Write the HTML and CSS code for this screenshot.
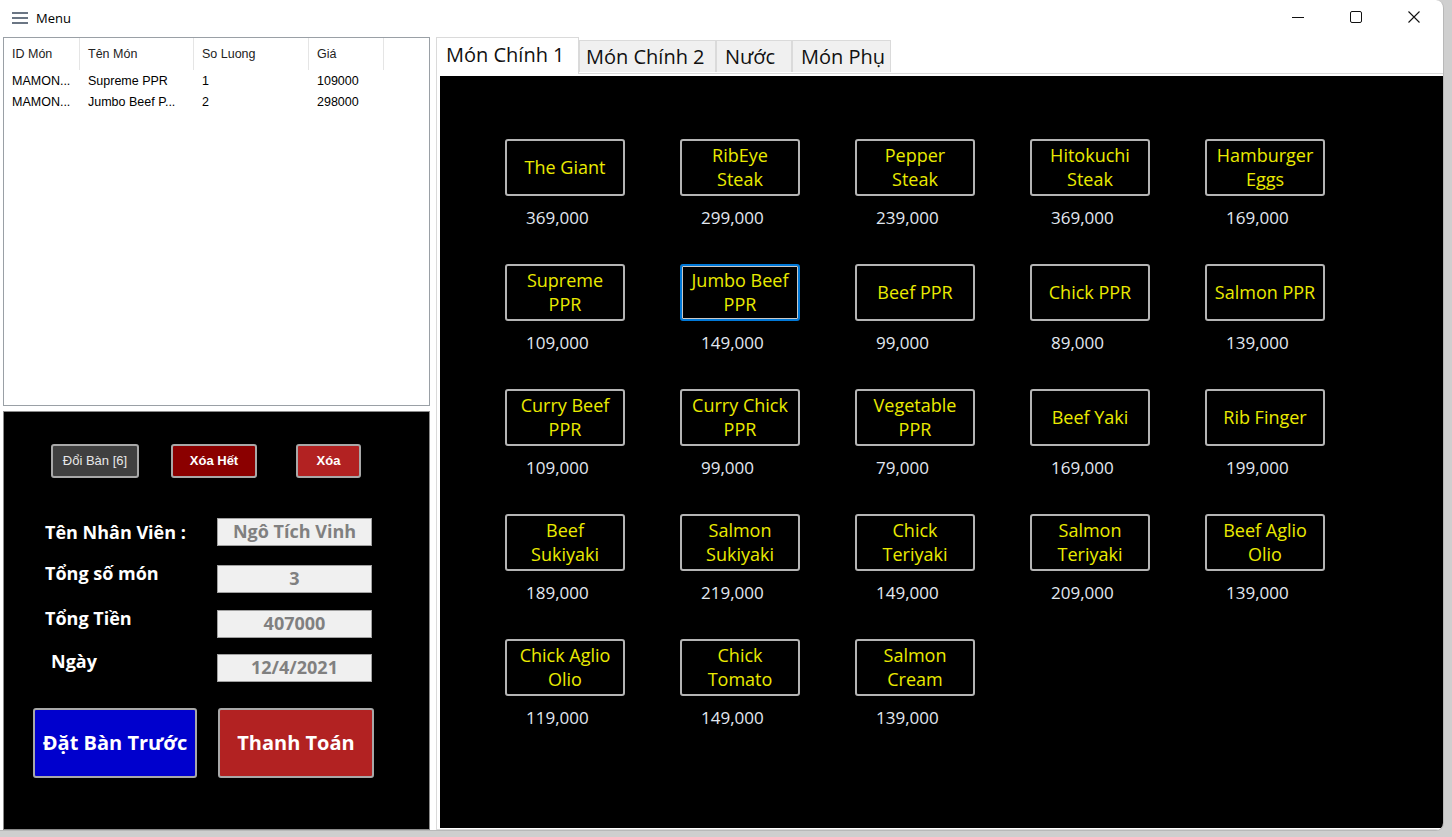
FILE: index.html
```html
<!DOCTYPE html>
<html lang="vi">
<head>
<meta charset="utf-8">
<title>Menu</title>
<link rel="stylesheet" href="styles.css">
</head>
<body>
<div class="window">
  <div class="titlebar">
    <svg class="hamburger" width="16" height="12" viewBox="0 0 16 12"><rect x="0" y="0" width="16" height="2" fill="#6b7684"/><rect x="0" y="5" width="16" height="2" fill="#6b7684"/><rect x="0" y="10" width="16" height="2" fill="#6b7684"/></svg>
    <span class="title">Menu</span>
    <div class="controls">
      <span class="ctl"><svg width="12" height="12" viewBox="0 0 12 12"><line x1="0" y1="6.5" x2="12" y2="6.5" stroke="#111" stroke-width="1"/></svg></span>
      <span class="ctl"><svg width="12" height="12" viewBox="0 0 12 12"><rect x="0.5" y="0.5" width="11" height="11" rx="1.5" fill="none" stroke="#111" stroke-width="1"/></svg></span>
      <span class="ctl"><svg width="12" height="12" viewBox="0 0 12 12"><path d="M0.5 0.5 L11.5 11.5 M11.5 0.5 L0.5 11.5" stroke="#111" stroke-width="1.1"/></svg></span>
    </div>
  </div>
  <div class="main">
    <div class="left">
      <div class="list">
        <div class="lrow lhead">
          <span class="c1">ID Món</span><span class="c2">Tên Món</span><span class="c3">So Luong</span><span class="c4">Giá</span><span class="c5"></span>
        </div>
        <div class="lrow">
          <span class="c1">MAMON...</span><span class="c2">Supreme PPR</span><span class="c3">1</span><span class="c4">109000</span>
        </div>
        <div class="lrow">
          <span class="c1">MAMON...</span><span class="c2">Jumbo Beef P...</span><span class="c3">2</span><span class="c4">298000</span>
        </div>
      </div>
      <div class="panel">
        <div class="smallbtns">
          <button class="sbtn doi">Đổi Bàn [6]</button>
          <button class="sbtn xoahet">Xóa Hết</button>
          <button class="sbtn xoa">Xóa</button>
        </div>
        <div class="fields">
          <div class="frow r1">
            <span class="flabel">Tên Nhân Viên :</span>
            <span class="fbox">Ngô Tích Vinh</span>
          </div>
          <div class="frow r2">
            <span class="flabel up">Tổng số món</span>
            <span class="fbox">3</span>
          </div>
          <div class="frow r3">
            <span class="flabel up">Tổng Tiền</span>
            <span class="fbox">407000</span>
          </div>
          <div class="frow r4">
            <span class="flabel up indent">Ngày</span>
            <span class="fbox">12/4/2021</span>
          </div>
        </div>
        <div class="bigbtns">
          <button class="bbtn blue">Đặt Bàn Trước</button>
          <button class="bbtn red">Thanh Toán</button>
        </div>
      </div>
    </div>
    <div class="tabs">
      <div class="tabstrip">
        <span class="tab active">Món Chính 1</span>
        <span class="tab t2">Món Chính 2</span>
        <span class="tab t3">Nước</span>
        <span class="tab t4">Món Phụ</span>
      </div>
      <div class="page">
        <div class="food">
          <div class="grid">
            <div class="item"><button class="fbtn">The Giant</button><span class="price">369,000</span></div>
            <div class="item"><button class="fbtn">RibEye<br>Steak</button><span class="price">299,000</span></div>
            <div class="item"><button class="fbtn">Pepper<br>Steak</button><span class="price">239,000</span></div>
            <div class="item"><button class="fbtn">Hitokuchi<br>Steak</button><span class="price">369,000</span></div>
            <div class="item"><button class="fbtn">Hamburger<br>Eggs</button><span class="price">169,000</span></div>

            <div class="item"><button class="fbtn">Supreme<br>PPR</button><span class="price">109,000</span></div>
            <div class="item"><button class="fbtn focus">Jumbo Beef<br>PPR</button><span class="price">149,000</span></div>
            <div class="item"><button class="fbtn">Beef PPR</button><span class="price">99,000</span></div>
            <div class="item"><button class="fbtn">Chick PPR</button><span class="price">89,000</span></div>
            <div class="item"><button class="fbtn">Salmon PPR</button><span class="price">139,000</span></div>

            <div class="item"><button class="fbtn">Curry Beef<br>PPR</button><span class="price">109,000</span></div>
            <div class="item"><button class="fbtn">Curry Chick<br>PPR</button><span class="price">99,000</span></div>
            <div class="item"><button class="fbtn">Vegetable<br>PPR</button><span class="price">79,000</span></div>
            <div class="item"><button class="fbtn">Beef Yaki</button><span class="price">169,000</span></div>
            <div class="item"><button class="fbtn">Rib Finger</button><span class="price">199,000</span></div>

            <div class="item"><button class="fbtn">Beef<br>Sukiyaki</button><span class="price">189,000</span></div>
            <div class="item"><button class="fbtn">Salmon<br>Sukiyaki</button><span class="price">219,000</span></div>
            <div class="item"><button class="fbtn">Chick<br>Teriyaki</button><span class="price">149,000</span></div>
            <div class="item"><button class="fbtn">Salmon<br>Teriyaki</button><span class="price">209,000</span></div>
            <div class="item"><button class="fbtn">Beef Aglio<br>Olio</button><span class="price">139,000</span></div>

            <div class="item"><button class="fbtn">Chick Aglio<br>Olio</button><span class="price">119,000</span></div>
            <div class="item"><button class="fbtn">Chick<br>Tomato</button><span class="price">149,000</span></div>
            <div class="item"><button class="fbtn">Salmon<br>Cream</button><span class="price">139,000</span></div>
          </div>
        </div>
      </div>
    </div>
  </div>
</div>
</body>
</html>
```

FILE: styles.css
```css
html, body {
  margin: 0;
  padding: 0;
}
body {
  background: #cfcfcf;
  width: 1452px;
  height: 837px;
  overflow: hidden;
  font-family: "Open Sans", "Noto Sans", sans-serif;
}
.window {
  width: 1444px;
  height: 831px;
  background: #ffffff;
  border-radius: 0 8px 8px 0;
  box-sizing: border-box;
  border-right: 1px solid #b8b8b8;
  border-bottom: 1px solid #b8b8b8;
  display: flex;
  flex-direction: column;
  overflow: hidden;
}
.titlebar {
  height: 37px;
  flex: none;
  display: flex;
  align-items: center;
  padding-left: 12px;
  box-sizing: border-box;
}
.hamburger {
  display: block;
  margin-top: -1px;
}
.title {
  margin-left: 8px;
  font-size: 13px;
  color: #000;
  margin-top: -2px;
}
.controls {
  margin-left: auto;
  display: flex;
  margin-top: -3px;
}
.ctl {
  width: 58px;
  height: 30px;
  display: flex;
  align-items: center;
  justify-content: center;
}
.main {
  flex: 1;
  display: flex;
  min-height: 0;
}
.left {
  width: 427px;
  margin-left: 3px;
  display: flex;
  flex-direction: column;
  flex: none;
}
.list {
  height: 369px;
  border: 1px solid #9aa0a6;
  box-sizing: border-box;
  background: #fff;
  font-family: "Liberation Sans", Arial, sans-serif;
  font-size: 12.5px;
}
.lrow {
  display: flex;
  height: 21px;
  align-items: center;
  color: #000;
}
.lhead {
  height: 32px;
  color: #222;
}
.lrow span {
  box-sizing: border-box;
  padding-left: 8px;
  white-space: nowrap;
  overflow: hidden;
}
.lhead span {
  height: 32px;
  line-height: 32px;
  border-right: 1px solid #e5e5e5;
}
.c1 { width: 76px; }
.c2 { width: 114px; }
.c3 { width: 115px; }
.c4 { width: 75px; }
.lhead .c5 { width: 0; border-right: none; }

.panel {
  margin-top: 5px;
  height: 420px;
  background: #000;
  border: 1px solid #8a8a8a;
  box-sizing: border-box;
  display: flex;
  flex-direction: column;
}
.smallbtns {
  display: flex;
  padding-top: 32px;
  padding-left: 47px;
}
.sbtn {
  height: 34px;
  border: 2px solid #a8a8a8;
  border-radius: 3px;
  color: #fff;
  font-family: "Liberation Sans", Arial, sans-serif;
  font-size: 13px;
  padding: 0;
}
.doi {
  width: 88px;
  background: #404040;
  color: #e8e8e8;
}
.xoahet {
  width: 86px;
  margin-left: 32px;
  background: #8b0000;
  font-weight: bold;
}
.xoa {
  width: 65px;
  margin-left: 39px;
  background: #b22222;
  font-weight: bold;
}
.fields {
  margin-top: 40px;
  display: flex;
  flex-direction: column;
}
.frow {
  display: flex;
  align-items: center;
  height: 28px;
}
.frow.r2 { margin-top: 19px; }
.frow.r3 { margin-top: 17px; }
.frow.r4 { margin-top: 16px; }
.flabel {
  width: 172px;
  padding-left: 41px;
  box-sizing: border-box;
  color: #fff;
  font-weight: bold;
  font-size: 18px;
  white-space: nowrap;
}
.flabel.up {
  margin-top: -12px;
}
.flabel.indent {
  padding-left: 47px;
  margin-top: -14px;
}
.fbox {
  width: 155px;
  height: 28px;
  box-sizing: border-box;
  background: #f0f0f0;
  border: 1px solid #a0a0a0;
  color: #808080;
  font-weight: bold;
  font-size: 18px;
  text-align: center;
  line-height: 25px;
  margin-left: 41px;
}
.bigbtns {
  display: flex;
  margin-top: 26px;
  padding-left: 29px;
}
.bbtn {
  height: 70px;
  border: 2px solid #a8a8a8;
  border-radius: 3px;
  color: #fff;
  font-family: "Open Sans", sans-serif;
  font-weight: bold;
  font-size: 20px;
  padding: 0;
  white-space: nowrap;
}
.bbtn.blue {
  width: 164px;
  background: #0000cd;
}
.bbtn.red {
  width: 156px;
  margin-left: 21px;
  background: #b22222;
}

.tabs {
  margin-left: 6px;
  flex: 1;
  display: flex;
  flex-direction: column;
  min-width: 0;
}
.tabstrip {
  display: flex;
  height: 36px;
  align-items: flex-end;
  position: relative;
  z-index: 1;
}
.tab {
  height: 32px;
  box-sizing: border-box;
  background: #f0f0f0;
  border: 1px solid #dadada;
  border-bottom: none;
  font-size: 20px;
  color: #111;
  line-height: 32px;
  padding-left: 6px;
  white-space: nowrap;
  margin-bottom: 1px;
}
.tab.active {
  height: 37px;
  background: #fff;
  line-height: 33px;
  padding-left: 9px;
  width: 143px;
  margin-bottom: -1px;
}
.t2 { width: 137px; padding-left: 6px; }
.t3 { width: 76px; padding-left: 8px; }
.t4 { width: 99px; padding-left: 8px; }
.page {
  flex: 1;
  border: 1px solid #dadada;
  border-right: none;
  background: #fff;
  padding: 2px 0 1px 3px;
  display: flex;
}
.food {
  flex: 1;
  background: #000;
  padding: 63px 0 0 65px;
}
.grid {
  display: grid;
  grid-template-columns: repeat(5, 120px);
  column-gap: 55px;
  grid-auto-rows: 125px;
}
.item {
  display: flex;
  flex-direction: column;
}
.fbtn {
  width: 120px;
  height: 57px;
  background: #000;
  border: 2px solid #b4b4b4;
  border-radius: 3px;
  color: #eaea00;
  font-family: "Open Sans", sans-serif;
  font-size: 18px;
  line-height: 24px;
  padding: 0 0 1px 0;
}
.fbtn.focus {
  border-color: #0078d7;
  box-shadow: inset 0 0 0 1px #c8c8c8;
}
.price {
  padding-left: 21px;
  margin-top: 10px;
  font-size: 17px;
  line-height: 24px;
  color: #e2e8f0;
}
```
